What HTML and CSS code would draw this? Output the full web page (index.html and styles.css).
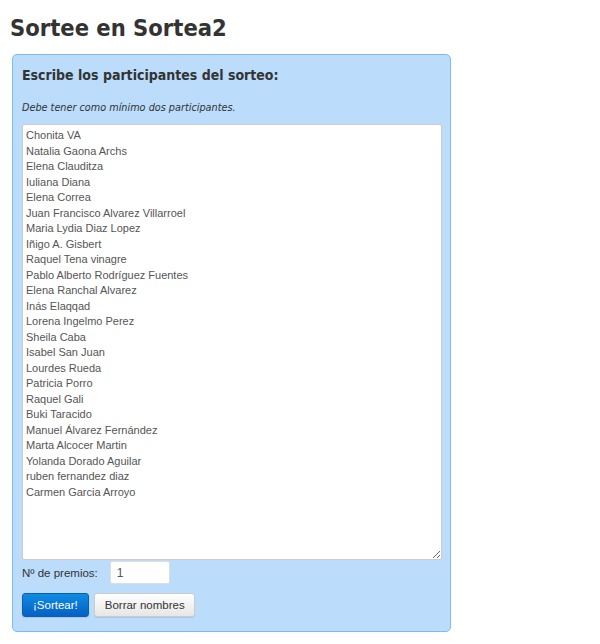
FILE: index.html
```html
<!DOCTYPE html>
<html lang="es">
<head>
    <meta charset="UTF-8">
    <meta name="viewport" content="width=device-width, initial-scale=1.0">
    <title>Sortea2</title>
    <link rel="stylesheet" href="styles.css">
</head>
<body>

<h1 class="title">Sortee en Sortea2</h1>

<form class="panel">
    <h2 class="panel-title">Escribe los participantes del sorteo:</h2>
    <p class="hint">Debe tener como mínimo dos participantes.</p>
    <textarea class="names">Chonita VA
Natalia Gaona Archs
Elena Clauditza
Iuliana Diana
Elena Correa
Juan Francisco Alvarez Villarroel
Maria Lydia Diaz Lopez
Iñigo A. Gisbert
Raquel Tena vinagre
Pablo Alberto Rodríguez Fuentes
Elena Ranchal Alvarez
Inás Elaqqad
Lorena Ingelmo Perez
Sheila Caba
Isabel San Juan
Lourdes Rueda
Patricia Porro
Raquel Gali
Buki Taracido
Manuel Álvarez Fernández
Marta Alcocer Martin
Yolanda Dorado Aguilar
ruben fernandez diaz
Carmen Garcia Arroyo</textarea>
    <div class="prizes">
        <label for="prizes">Nº de premios:</label>
        <input type="text" id="prizes" value="1">
    </div>
    <div class="actions">
        <button type="button" class="btn btn-primary">¡Sortear!</button>
        <button type="button" class="btn">Borrar nombres</button>
    </div>
</form>

</body>
</html>
```

FILE: styles.css
```css
body {
    margin: 0;
    padding: 10px 0 0 10px;
    background-color: #fff;
    color: #333;
    font-family: "Liberation Sans", Arial, sans-serif;
    font-size: 12px;
}

.title {
    margin: 0 0 8px 0;
    font-family: "DejaVu Sans Condensed", "DejaVu Sans", sans-serif;
    font-size: 23.5px;
    font-weight: bold;
    line-height: 36px;
    color: #333;
}

.panel {
    width: 419px;
    margin: 0 0 0 2px;
    padding: 10px 9px 14px 9px;
    background-color: #bbdcfa;
    border: 1px solid #7dbbf2;
    border-radius: 5px;
}

.panel-title {
    margin: 0;
    font-family: "DejaVu Sans Condensed", "DejaVu Sans", sans-serif;
    font-size: 14px;
    font-weight: bold;
    line-height: 20px;
    color: #333;
}

.hint {
    margin: 16px 0 9px 0;
    font-family: "DejaVu Sans", sans-serif;
    font-size: 9.7px;
    font-style: italic;
    line-height: 14px;
}

.names {
    display: block;
    width: 420px;
    height: 436px;
    box-sizing: border-box;
    margin: 0;
    padding: 3px 3px;
    border: 1px solid #ccc;
    border-radius: 2px;
    background-color: #fff;
    color: #555;
    font-family: "Liberation Sans", Arial, sans-serif;
    font-size: 11px;
    line-height: 15.5px;
    resize: vertical;
}

.prizes {
    display: flex;
    align-items: center;
    gap: 12px;
    margin-top: 1px;
}

.prizes label {
    color: #333;
    font-size: 11.5px;
}

.prizes input {
    width: 60px;
    height: 23px;
    box-sizing: border-box;
    padding: 2px 6px;
    border: 1px solid #ddd;
    border-radius: 2px;
    color: #555;
    font-family: "Liberation Sans", Arial, sans-serif;
    font-size: 12px;
}

.actions {
    display: flex;
    gap: 5px;
    margin-top: 9px;
}

.btn {
    height: 24px;
    padding: 0 9px 0 10px;
    border: 1px solid #ccc;
    border-radius: 3px;
    background: linear-gradient(#fff, #e6e6e6);
    color: #333;
    font-family: "Liberation Sans", Arial, sans-serif;
    font-size: 11.5px;
    box-shadow: 0 1px 1px rgba(0, 0, 0, 0.1);
    cursor: pointer;
}

.btn-primary {
    padding: 0 10px;
    border-color: #0b5fb0;
    background: linear-gradient(#0e8ce4, #0660c4);
    color: #fff;
}
```
